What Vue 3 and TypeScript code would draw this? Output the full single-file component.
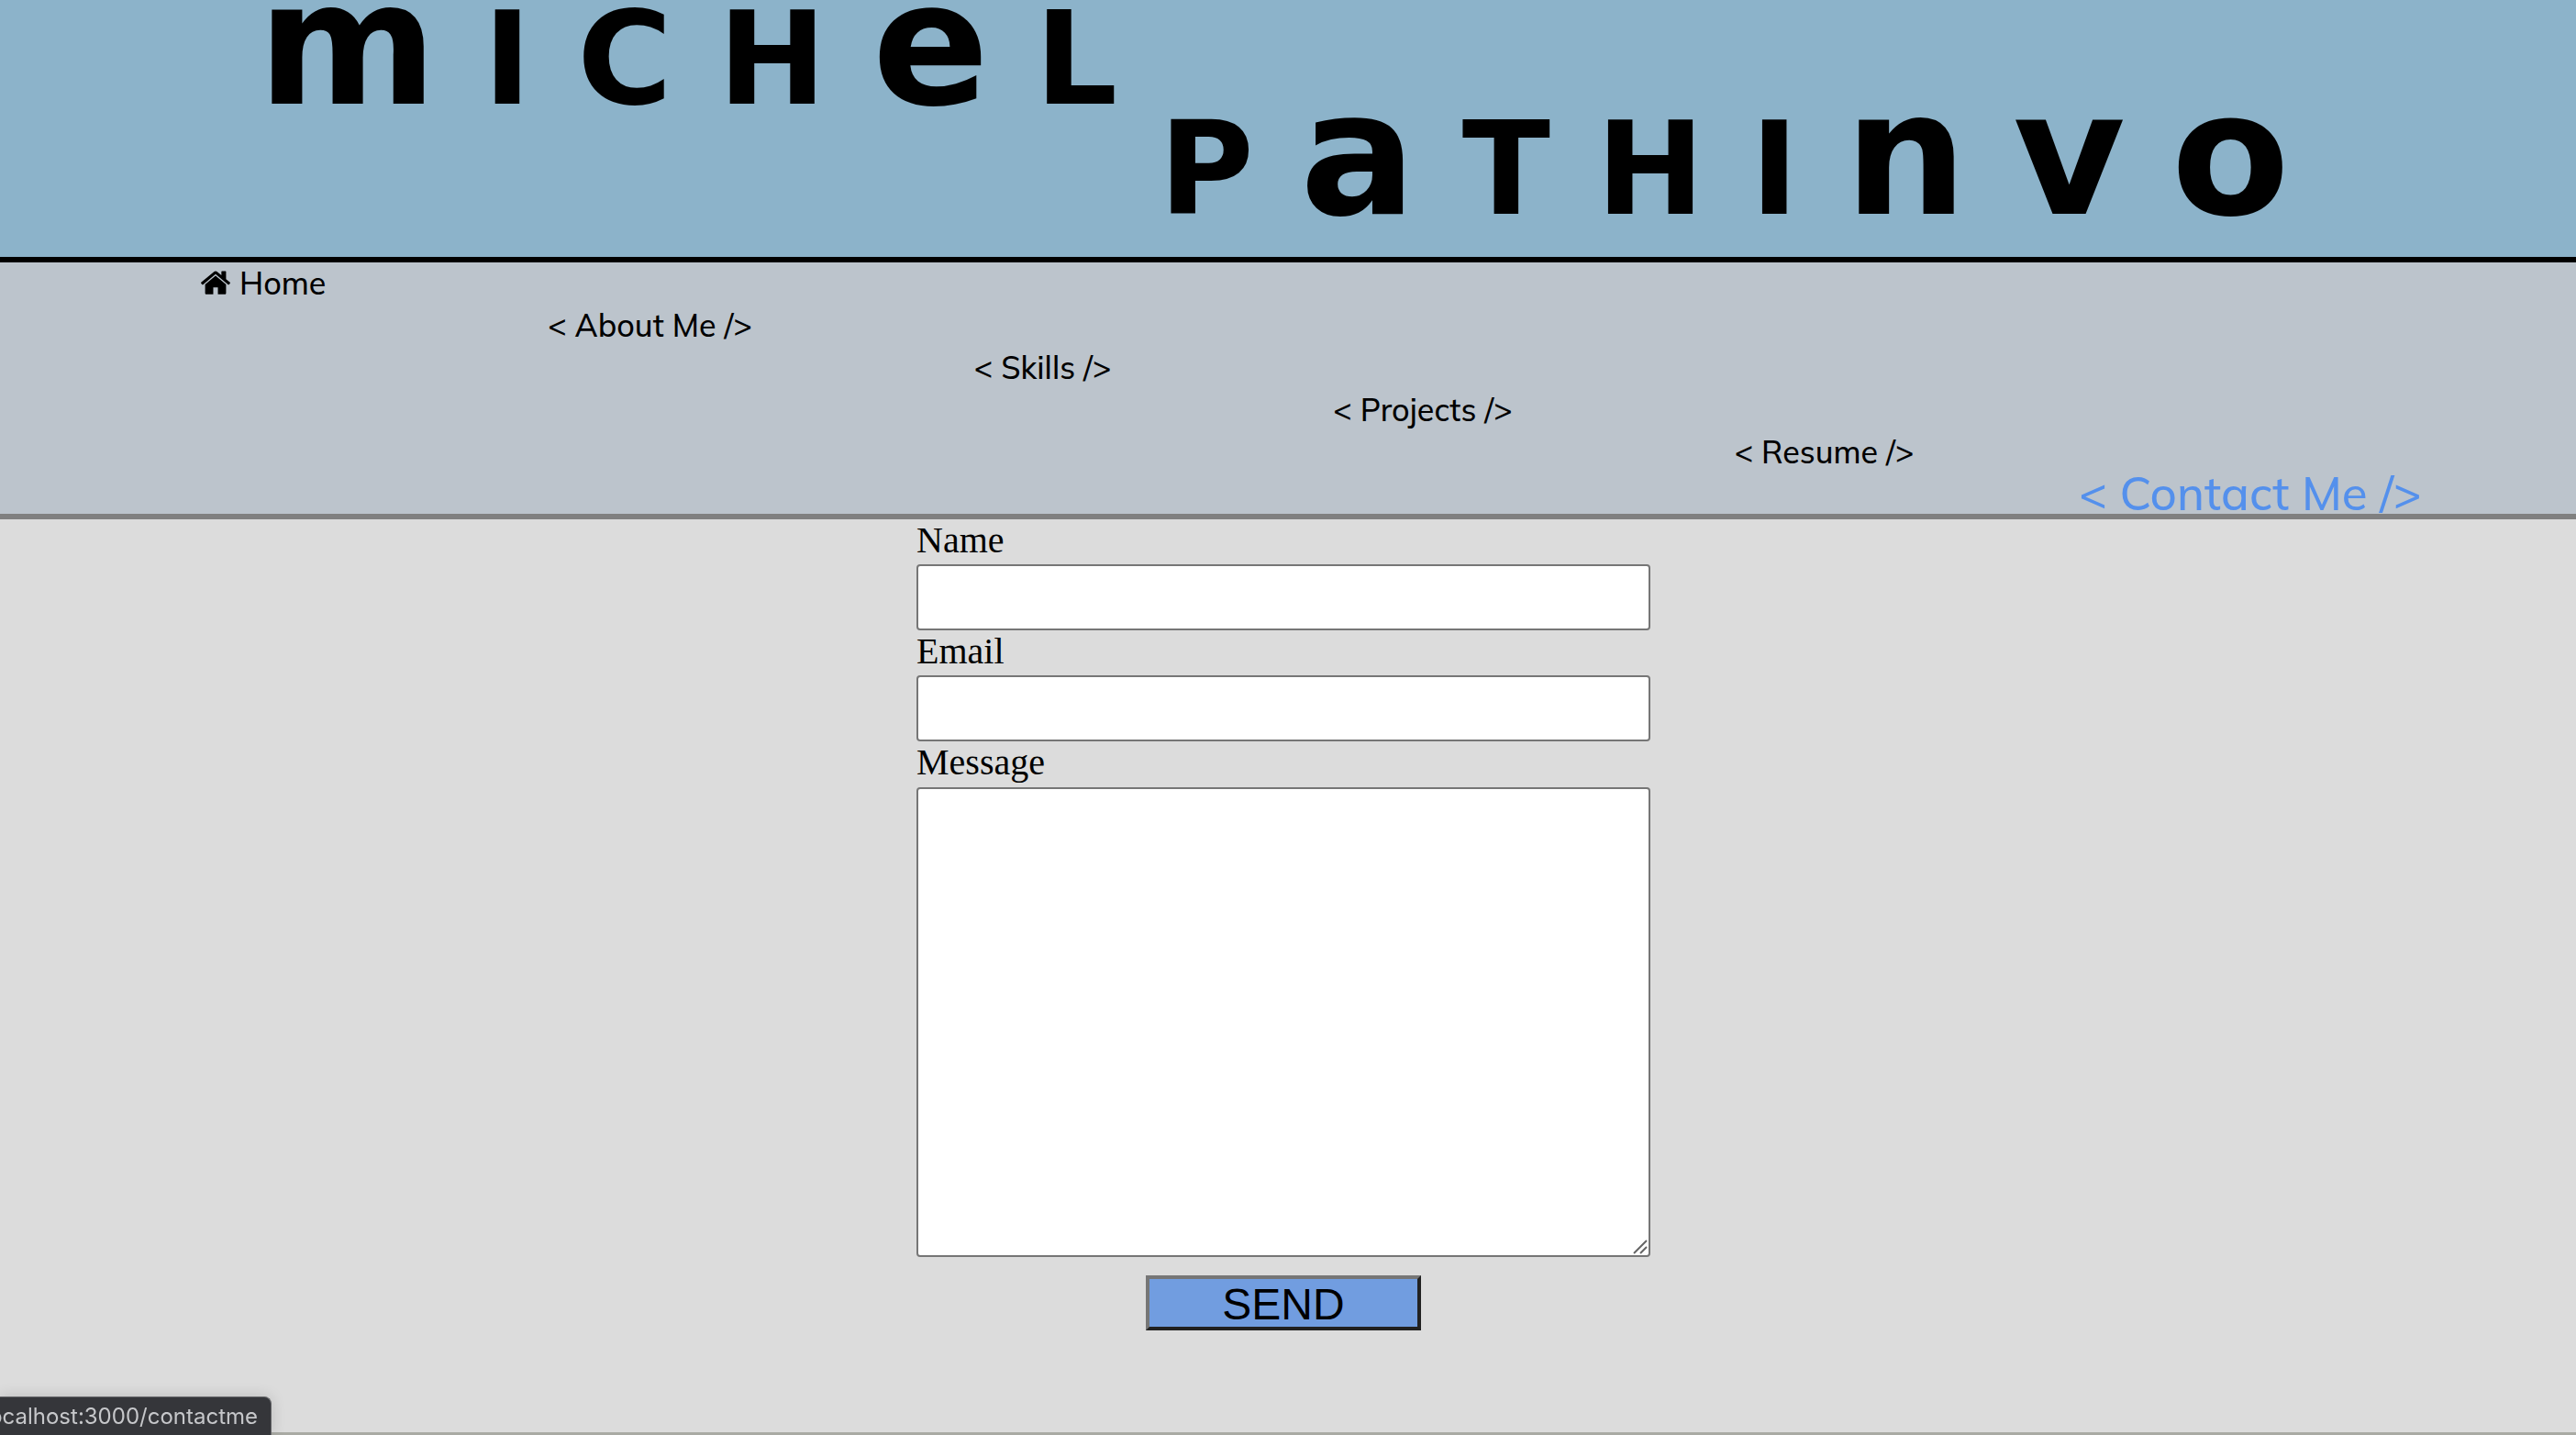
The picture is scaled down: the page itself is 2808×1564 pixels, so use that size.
<script setup lang="ts">
import { ref } from 'vue'

interface Run {
  text: string
  tall: boolean
}

interface NavLink {
  label: string
  href: string
  active?: boolean
}

// The wordmark mixes capitals with small letters drawn at capital height.
const firstName: Run[] = [
  { text: 'm', tall: true },
  { text: 'ICH', tall: false },
  { text: 'e', tall: true },
  { text: 'L', tall: false },
]
const lastName: Run[] = [
  { text: 'P', tall: false },
  { text: 'a', tall: true },
  { text: 'THI', tall: false },
  { text: 'nvo', tall: true },
]

const links: NavLink[] = [
  { label: '< About Me />', href: '/aboutme' },
  { label: '< Skills />', href: '/skills' },
  { label: '< Projects />', href: '/projects' },
  { label: '< Resume />', href: '/resume' },
  { label: '< Contact Me />', href: '/contactme', active: true },
]

const name = ref('')
const email = ref('')
const message = ref('')
</script>

<template>
  <div class="page">
    <header class="banner">
      <h1 class="wordmark">
        <span class="word first"><span v-for="run in firstName" :key="run.text" :class="{ tall: run.tall }">{{ run.text }}</span></span>
        <span class="word last"><span v-for="run in lastName" :key="run.text" :class="{ tall: run.tall }">{{ run.text }}</span></span>
      </h1>
    </header>

    <nav class="nav">
      <a class="link" href="/">
        <svg class="home" viewBox="24 242 1616 1294" aria-hidden="true">
          <path d="M1408 992v480q0 26-19 45t-45 19h-384v-384h-256v384h-384q-26 0-45-19t-19-45v-480q0-1 .5-3t.5-3l575-474 575 474q1 2 1 6zm223-69l-62 74q-8 9-21 11h-3q-13 0-21-7l-692-577-692 577q-12 8-24 7-13-2-21-11l-62-74q-8-10-7-23.500t11-21.500l719-599q32-26 76-26t76 26l244 204v-195q0-14 9-23t23-9h192q14 0 23 9t9 23v408l219 182q10 8 11 21.500t-7 23.500z" />
        </svg>
        <span>Home</span>
      </a>
      <a v-for="link in links" :key="link.href" class="link" :class="{ active: link.active }" :href="link.href">{{ link.label }}</a>
    </nav>

    <main class="content">
      <form class="form" @submit.prevent>
        <label for="name">Name</label>
        <input id="name" v-model="name" type="text" />
        <label for="email">Email</label>
        <input id="email" v-model="email" type="email" />
        <label for="message">Message</label>
        <div class="area">
          <textarea id="message" v-model="message"></textarea>
          <svg class="grip" viewBox="0 0 16 16" aria-hidden="true">
            <path d="M1 15 15 1M8 15l7-7" />
          </svg>
        </div>
        <button type="submit">SEND</button>
      </form>
    </main>

    <footer class="footer"></footer>
    <div class="status"><span>localhost:3000/contactme</span></div>
  </div>
</template>

<style>
body {
  margin: 0;
  background: #dcdcdc;
}
</style>

<style scoped>
.page {
  display: flex;
  flex-direction: column;
  min-height: 100vh;
  box-sizing: border-box;
  color: #000;
}

.banner {
  height: 280px;
  border-bottom: 6px solid #000;
  background: #8cb3ca;
}

.wordmark {
  margin: 0;
  font-family: Syncopate, "DejaVu Sans", sans-serif;
  font-size: 141px;
  font-weight: 700;
  letter-spacing: 50px;
}

.word {
  display: block;
  height: 120px;
  line-height: 96px;
  white-space: nowrap;
}

.first {
  padding-left: 10%;
}

.last {
  padding-left: 45%;
}

.tall {
  font-size: 188px;
}

.nav {
  display: flex;
  justify-content: space-between;
  height: 274px;
  padding: 0 8.2% 0 7.8%;
  border-bottom: 6px solid #808080;
  background: #bcc4cc;
  font-family: Muli, Mulish, Lato, sans-serif;
  font-size: 34px;
  font-weight: 500;
  line-height: 46px;
}

.link {
  height: 46px;
  color: #000;
  text-decoration: none;
  white-space: nowrap;
}

.link:nth-child(2) {
  margin-top: 46px;
}

.link:nth-child(3) {
  margin-top: 92px;
}

.link:nth-child(4) {
  margin-top: 138px;
}

.link:nth-child(5) {
  margin-top: 184px;
}

.link:nth-child(6) {
  margin-top: 228px;
}

.link.active {
  margin-right: -62px;
  margin-left: -62px;
  color: #5490ec;
  font-size: 51px;
}

.home {
  width: 32px;
  height: 26px;
  margin-right: 10px;
}

.content {
  flex: 1;
  padding-right: 10px;
}

.form {
  display: flex;
  flex-direction: column;
  width: 800px;
  max-width: 100%;
  margin: 0 auto;
}

.form label {
  height: 49px;
  font-family: "Liberation Serif", "Times New Roman", serif;
  font-size: 40px;
  line-height: 46px;
}

.form input,
.form textarea {
  box-sizing: border-box;
  width: 100%;
  margin: 0;
  border: 2px solid #767676;
  border-radius: 4px;
  background: #fff;
  font-family: "Liberation Sans", Arial, sans-serif;
  font-size: 40px;
}

.form input {
  height: 72px;
}

.area {
  position: relative;
  height: 512px;
  margin-top: 1px;
}

.form textarea {
  display: block;
  height: 100%;
  resize: none;
}

.grip {
  position: absolute;
  right: 3px;
  bottom: 3px;
  width: 16px;
  height: 16px;
  fill: none;
  stroke: #666;
  stroke-width: 2;
}

.form button {
  align-self: center;
  box-sizing: border-box;
  width: 300px;
  height: 60px;
  margin: 20px 0;
  padding: 4px 0 0;
  border: 4px solid;
  border-color: #767676 #212121 #212121 #767676;
  background: #719de0;
  color: #000;
  font-family: "Liberation Sans", Arial, sans-serif;
  font-size: 48px;
  line-height: 48px;
}

.footer {
  height: 3px;
  background: #a9aaa4;
}

.status {
  position: fixed;
  bottom: 0;
  left: 0;
  display: flex;
  justify-content: flex-end;
  box-sizing: border-box;
  width: 296px;
  height: 42px;
  padding-right: 14px;
  overflow: hidden;
  border-top: 1px solid #66676a;
  border-right: 1px solid #66676a;
  border-top-right-radius: 8px;
  background: #35363a;
  box-shadow: 0 0 16px rgba(0, 0, 0, 0.15);
  color: #c6c7ca;
  font-family: Inter, sans-serif;
  font-size: 24px;
  line-height: 42px;
  white-space: nowrap;
}
</style>
